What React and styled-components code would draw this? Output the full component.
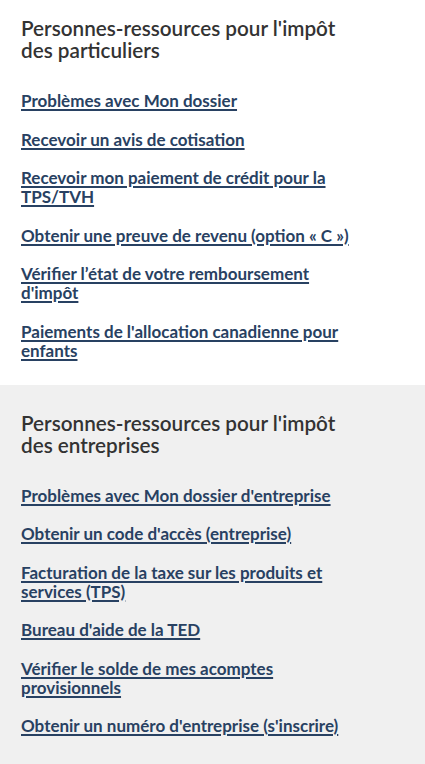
import React from 'react'
import styled, { createGlobalStyle } from 'styled-components'

const GlobalStyle = createGlobalStyle`
  html, body {
    margin: 0;
    padding: 0;
    background: #fff;
  }
  body {
    font-family: Lato, "Noto Sans", sans-serif;
  }
`

const sections = [
  {
    title: "Personnes-ressources pour l'impôt des particuliers",
    tone: 'light',
    links: [
      'Problèmes avec Mon dossier',
      'Recevoir un avis de cotisation',
      'Recevoir mon paiement de crédit pour la TPS/TVH',
      'Obtenir une preuve de revenu (option « C »)',
      'Vérifier l’état de votre remboursement d\'impôt',
      "Paiements de l'allocation canadienne pour enfants",
    ],
  },
  {
    title: "Personnes-ressources pour l'impôt des entreprises",
    tone: 'grey',
    links: [
      "Problèmes avec Mon dossier d'entreprise",
      "Obtenir un code d'accès (entreprise)",
      'Facturation de la taxe sur les produits et services (TPS)',
      "Bureau d'aide de la TED",
      'Vérifier le solde de mes acomptes provisionnels',
      "Obtenir un numéro d'entreprise (s'inscrire)",
    ],
  },
]

const Page = styled.main`
  width: 425px;
  min-height: 764px;
  background: #f0f0f0;
`

const Section = styled.section`
  background: ${props => (props.tone === 'grey' ? '#f0f0f0' : '#fff')};
  padding: ${props => (props.tone === 'grey' ? '27px 21px 30px' : '17px 21px 25px')};
`

const Inner = styled.div`
  width: 330px;
`

const Heading = styled.h2`
  margin: 0 0 30px;
  font-family: Lato, "Noto Sans", sans-serif;
  font-size: 20.7px;
  line-height: 22px;
  font-weight: 600;
  color: #333;
`

const LinkList = styled.ul`
  list-style: none;
  margin: 0;
  padding: 0;
  display: flex;
  flex-direction: column;
  gap: 19.5px;
`

const LinkItem = styled.li`
  font-size: 17px;
  line-height: 19px;
`

const Link = styled.a`
  color: #284162;
  font-weight: 700;
  text-decoration: underline;
  text-decoration-thickness: 1.5px;
  text-underline-offset: 2px;
`

export default function App() {
  return (
    <Page>
      <GlobalStyle />
      {sections.map(section => (
        <Section key={section.title} tone={section.tone}>
          <Inner>
            <Heading>{section.title}</Heading>
            <LinkList>
              {section.links.map(link => (
                <LinkItem key={link}>
                  <Link href="#">{link}</Link>
                </LinkItem>
              ))}
            </LinkList>
          </Inner>
        </Section>
      ))}
    </Page>
  )
}
